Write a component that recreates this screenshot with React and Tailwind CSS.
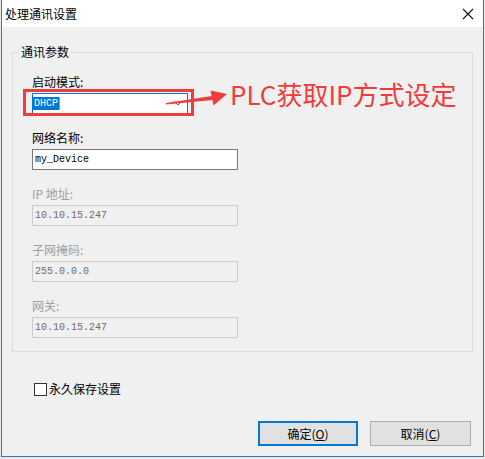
import React from 'react';

const UI = { fontFamily: '"Noto Sans CJK SC", "Liberation Sans", sans-serif' };
const MONO = { fontFamily: '"Liberation Mono", "Noto Sans CJK SC", monospace' };

function Field({ label, value, disabled }) {
  return (
    <div className="flex flex-col">
      <div className={`h-[16px] leading-[16px] text-[12px] ${disabled ? 'text-[#a0a0a0]' : 'text-black'}`}>{label}</div>
      <div
        className={`mt-[3px] w-[206px] h-[21px] border flex items-center pl-[2px] text-[10px] ${
          disabled ? 'bg-[#f0f0f0] border-[#cccccc] text-[#6d6d6d]' : 'bg-white border-[#7a7a7a] text-black'
        }`}
        style={MONO}
      >
        {value}
      </div>
    </div>
  );
}

export default function App() {
  return (
    <div className="relative w-[485px] h-[459px] bg-[#e9e9e9] overflow-hidden" style={UI}>
      <div className="ml-[1px] w-[483px] h-[457px] border-l border-r border-b border-[#1e7fd0] bg-[#f0f0f0] flex flex-col">
        {/* title bar */}
        <div className="h-[27px] bg-white flex items-center justify-between">
          <span className="ml-[3px] text-[12px] leading-[16px] text-black">处理通讯设置</span>
          <svg width="12" height="12" viewBox="0 0 12 12" className="mr-[9px]">
            <path d="M1 1L11 11M11 1L1 11" stroke="#111" strokeWidth="1.1" />
          </svg>
        </div>

        {/* group box */}
        <div className="relative mt-[25px] ml-[10px] w-[461px] h-[300px] border border-[#dcdcdc] pl-[19px] pt-[21px]">
          <span className="absolute left-[6px] -top-[9px] px-[2px] bg-[#f0f0f0] text-[12px] leading-[16px] text-black">通讯参数</span>
          <div className="flex flex-col gap-[16px]">
            <div className="flex flex-col">
              <div className="h-[16px] leading-[16px] text-[12px] text-black">启动模式:</div>
              <div className="mt-[3px] w-[156px] h-[21px] border border-[#0078d7] bg-white flex items-center justify-between">
                <span className="flex items-center">
                  <span className="h-[13px] leading-[13px] px-[1px] bg-[#0078d7] text-white text-[10px]" style={MONO}>DHCP</span>
                  <span className="w-[1px] h-[13px] bg-[#e08a3a]" />
                </span>
                <svg width="8" height="5" viewBox="0 0 8 5" className="mr-[5px]">
                  <path d="M0.5 0.5L4 4L7.5 0.5" stroke="#606060" fill="none" />
                </svg>
              </div>
            </div>
            <Field label="网络名称:" value="my_Device" />
            <Field label="IP 地址:" value="10.10.15.247" disabled />
            <Field label="子网掩码:" value="255.0.0.0" disabled />
            <Field label="网关:" value="10.10.15.247" disabled />
          </div>
        </div>

        {/* checkbox */}
        <div className="mt-[29px] ml-[32px] flex items-center gap-[2px] h-[16px]">
          <span className="w-[13px] h-[13px] border border-[#333] bg-white" />
          <span className="text-[12px] leading-[16px] text-black">永久保存设置</span>
        </div>

        {/* buttons */}
        <div className="mt-[24px] mr-[12px] flex justify-end gap-[12px]">
          <button className="w-[100px] h-[25px] border-2 border-[#0078d7] bg-[#e1e1e1] text-[12px] text-black">
            确定(<span className="underline">O</span>)
          </button>
          <button className="w-[101px] h-[25px] border border-[#adadad] bg-[#e1e1e1] text-[12px] text-black">
            取消(<span className="underline">C</span>)
          </button>
        </div>
      </div>

      {/* annotation */}
      <div className="absolute left-[23px] top-[89px] w-[171px] h-[27px] border-[3px] border-[#f03c3c]" />
      <svg className="absolute left-0 top-0" width="485" height="459" viewBox="0 0 485 459">
        <path d="M166 103 L212 96 L213 100 L166 104.5 Z" fill="#f03c3c" />
        <path d="M210.5 90.5 L227 94 L213.5 105.5 Z" fill="#f03c3c" />
      </svg>
      <div className="absolute left-[230px] top-[81px] text-[26px] leading-[26px] text-[#f23a3a] whitespace-nowrap">
        PLC获取IP方式设定
      </div>
    </div>
  );
}
